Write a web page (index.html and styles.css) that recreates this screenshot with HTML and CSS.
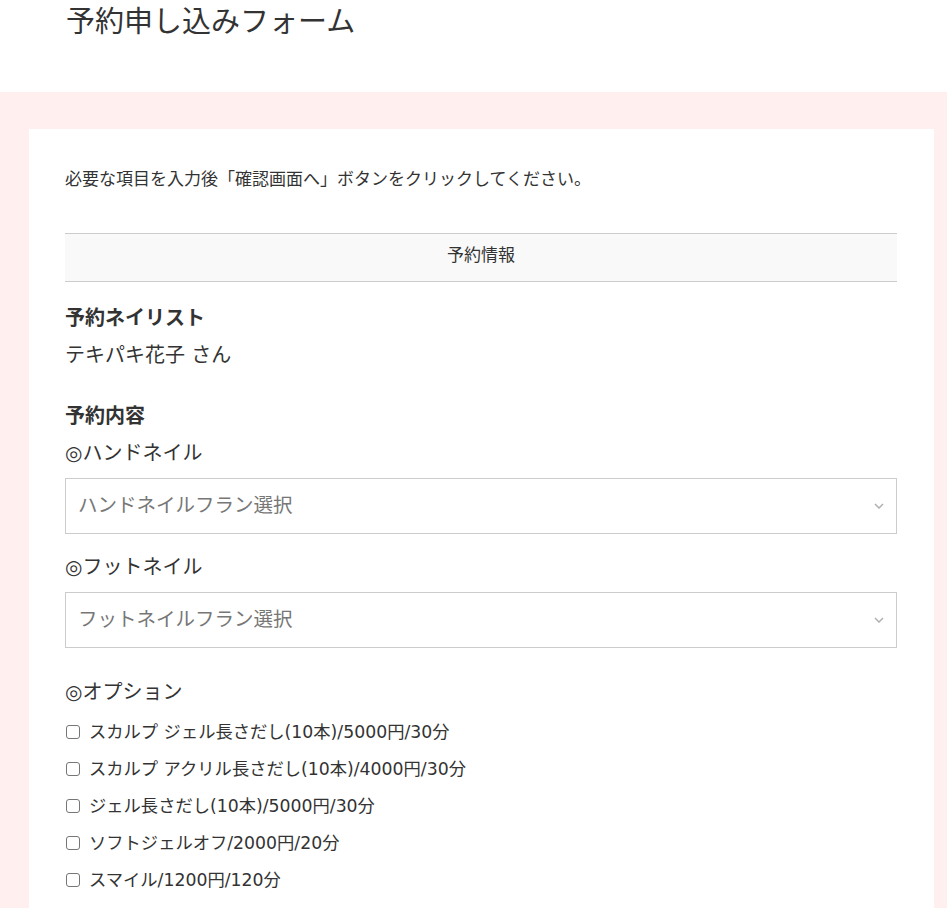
FILE: index.html
```html
<!DOCTYPE html>
<html lang="ja">
<head>
<meta charset="utf-8">
<title>予約申し込みフォーム</title>
<link rel="stylesheet" href="styles.css">
</head>
<body>
<header class="page-header">
  <h1 class="page-title">予約申し込みフォーム</h1>
</header>
<main class="page-bg">
  <section class="card">
    <p class="intro">必要な項目を入力後「確認画面へ」ボタンをクリックしてください。</p>
    <h2 class="section-bar">予約情報</h2>

    <div class="field">
      <h3 class="field-label">予約ネイリスト</h3>
      <p class="field-value">テキパキ花子 さん</p>
    </div>

    <div class="field field-content">
      <h3 class="field-label">予約内容</h3>
      <p class="sub-label">◎ハンドネイル</p>
      <div class="select-box">
        <span class="select-text">ハンドネイルフラン選択</span>
        <svg class="chevron" width="10" height="6" viewBox="0 0 10 6"><path d="M1 1 L5 5 L9 1" fill="none" stroke="#b0b0b0" stroke-width="1.5"/></svg>
      </div>
      <p class="sub-label sub-gap">◎フットネイル</p>
      <div class="select-box">
        <span class="select-text">フットネイルフラン選択</span>
        <svg class="chevron" width="10" height="6" viewBox="0 0 10 6"><path d="M1 1 L5 5 L9 1" fill="none" stroke="#b0b0b0" stroke-width="1.5"/></svg>
      </div>
      <p class="sub-label option-gap">◎オプション</p>
      <ul class="options">
        <li><label class="option"><span class="box"></span>スカルプ ジェル長さだし(10本)/5000円/30分</label></li>
        <li><label class="option"><span class="box"></span>スカルプ アクリル長さだし(10本)/4000円/30分</label></li>
        <li><label class="option"><span class="box"></span>ジェル長さだし(10本)/5000円/30分</label></li>
        <li><label class="option"><span class="box"></span>ソフトジェルオフ/2000円/20分</label></li>
        <li><label class="option"><span class="box"></span>スマイル/1200円/120分</label></li>
      </ul>
    </div>
  </section>
</main>
</body>
</html>
```
FILE: styles.css
```css
* { box-sizing: border-box; }
html, body {
  margin: 0;
  padding: 0;
  background: #ffffff;
  color: #333333;
  font-family: "DejaVu Sans", "Noto Sans CJK JP", sans-serif;
}
.page-header {
  height: 92px;
  padding-left: 66px;
}
.page-title {
  margin: 0;
  font-size: 29px;
  font-weight: 400;
  line-height: 44px;
  color: #333;
}
.page-bg {
  background: #ffefef;
  padding: 37px 13px 0 29px;
  min-height: 816px;
}
.card {
  background: #fff;
  padding: 36px 37px 20px 36px;
  min-height: 779px;
}
.intro {
  margin: 0;
  font-size: 17px;
  line-height: 29px;
}
.section-bar {
  margin: 39px 0 0;
  height: 49px;
  border-top: 1px solid #cccccc;
  border-bottom: 1px solid #cccccc;
  background: #f9f9f9;
  font-size: 17px;
  font-weight: 400;
  line-height: 43px;
  padding-bottom: 4px;
  text-align: center;
}
.field {
  margin-top: 21px;
}
.field-content {
  margin-top: 31px;
}
.field-label {
  margin: 0 0 7px;
  font-size: 20px;
  font-weight: 700;
  line-height: 30px;
}
.field-value, .sub-label {
  margin: 0;
  font-size: 20px;
  line-height: 30px;
}
.sub-label { margin-bottom: 10px; }
.sub-gap { margin-top: 18px; }
.option-gap { margin-top: 29px; margin-bottom: 6px; }
.select-box {
  height: 56px;
  border: 1px solid #cccccc;
  display: flex;
  align-items: center;
  justify-content: space-between;
  padding: 0 12px 5px 12px;
}
.select-text {
  font-size: 19.5px;
  color: #777777;
}
.chevron { margin-top: 5px; }
.options {
  list-style: none;
  margin: 0;
  padding: 0;
}
.options li {
  height: 37px;
  display: flex;
  align-items: center;
}
.option {
  display: flex;
  align-items: center;
  font-size: 17.3px;
  line-height: 24px;
}
.box {
  width: 14px;
  height: 14px;
  border: 1px solid #767676;
  border-radius: 3px;
  margin: 1px 9px 0 1px;
  background: #fff;
}
```
